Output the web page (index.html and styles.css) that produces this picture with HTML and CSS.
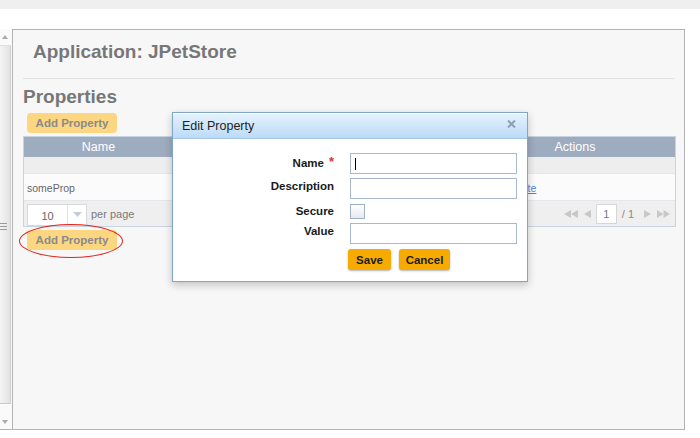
FILE: index.html
```html
<!DOCTYPE html>
<html>
<head>
<meta charset="utf-8">
<title>JPetStore Properties</title>
<link rel="stylesheet" href="styles.css">
</head>
<body>
<div class="topstrip"></div>
<div class="spacer"></div>
<div class="frame">
  <div class="sidebar">
    <div class="sb-up"><svg width="6" height="4" viewBox="0 0 6 4"><polygon points="0,4 3,0 6,4" fill="#aaa"/></svg></div>
    <div class="sb-thumb">
      <svg width="8" height="8" viewBox="0 0 8 8"><rect x="0" y="1" width="7" height="1" fill="#9a9a9a"/><rect x="0" y="4" width="7" height="1" fill="#9a9a9a"/><rect x="0" y="7" width="7" height="1" fill="#9a9a9a"/></svg>
    </div>
    <div class="sb-down"><svg width="6" height="4" viewBox="0 0 6 4"><polygon points="0,0 6,0 3,4" fill="#aaa"/></svg></div>
  </div>
  <div class="panel">
    <h1 class="app-title">Application: JPetStore</h1>
    <div class="sep"></div>
    <h2 class="section-title">Properties</h2>
    <button class="btn-add">Add Property</button>
    <div class="grid-table">
      <div class="thead">
        <div class="th">Name</div>
        <div class="th"></div>
        <div class="th">Actions</div>
      </div>
      <div class="filter-row"></div>
      <div class="data-row">
        <div class="td td-name">someProp</div>
        <div class="td"></div>
        <div class="td td-actions"><a class="link" href="#">Delete</a></div>
      </div>
      <div class="pager">
        <div class="pager-left">
          <div class="select">
            <span class="select-val">10</span>
            <span class="select-arrow"><svg width="9" height="5" viewBox="0 0 9 5"><polygon points="0,0 9,0 4.5,5" fill="#c3ccd8"/></svg></span>
          </div>
          <span class="per-page">per page</span>
        </div>
        <div class="pager-right">
          <svg class="pg-first" width="14" height="8" viewBox="0 0 14 8"><polygon points="7,0 0,4 7,8" fill="#c8c8c8"/><polygon points="14,0 7,4 14,8" fill="#c8c8c8"/></svg>
          <svg class="pg-prev" width="7" height="8" viewBox="0 0 7 8"><polygon points="7,0 0,4 7,8" fill="#c8c8c8"/></svg>
          <span class="pg-input">1</span>
          <span class="pg-total">/ 1</span>
          <svg class="pg-next" width="7" height="8" viewBox="0 0 7 8"><polygon points="0,0 7,4 0,8" fill="#c8c8c8"/></svg>
          <svg class="pg-last" width="13" height="8" viewBox="0 0 13 8"><polygon points="0,0 6.5,4 0,8" fill="#c8c8c8"/><polygon points="6.5,0 13,4 6.5,8" fill="#c8c8c8"/></svg>
        </div>
      </div>
    </div>
    <button class="btn-add btn-add-bottom">Add Property</button>
  </div>
</div>

<div class="highlight"></div>

<div class="dialog">
  <div class="dialog-title">
    <span>Edit Property</span>
    <svg class="dialog-close" width="9" height="8" viewBox="0 0 9 8"><path d="M1 0.5 L8 7.5 M8 0.5 L1 7.5" stroke="#8aa0b9" stroke-width="2"/></svg>
  </div>
  <div class="form">
    <label class="lbl lbl-req">Name<span class="req">*</span></label>
    <span class="field-focus"><input class="inp" type="text"></span>
    <label class="lbl">Description</label>
    <input class="inp" type="text">
    <label class="lbl">Secure</label>
    <span class="chk"></span>
    <label class="lbl">Value</label>
    <input class="inp" type="text">
    <span></span>
    <div class="actions">
      <button class="btn btn-save">Save</button>
      <button class="btn btn-cancel">Cancel</button>
    </div>
  </div>
</div>
</body>
</html>
```

FILE: styles.css
```css
* { box-sizing: border-box; }
html, body { margin: 0; padding: 0; }
body {
  width: 700px;
  height: 438px;
  overflow: hidden;
  background: #ffffff;
  font-family: "Liberation Sans", Arial, sans-serif;
  position: relative;
}
.topstrip { height: 9px; background: #efefef; }
.spacer { height: 20px; background: #ffffff; }

.frame {
  display: flex;
  width: 685px;
  height: 401px;
  border-bottom: 1px solid #b3b3b3;
}
.sidebar {
  width: 12px;
  display: flex;
  flex-direction: column;
  background: #fafafa;
}
.sb-up {
  height: 16px;
  display: flex;
  align-items: center;
  padding-left: 2px;
}
.sb-up svg, .sb-down svg { display: block; }
.sb-thumb {
  height: 359px;
  width: 11px;
  background: linear-gradient(to right, #f4f4f4, #e3e3e3);
  border-top: 1px solid #dedede;
  border-right: 1px solid #cfcfcf;
  border-bottom: 1px solid #c9c9c9;
  display: flex;
  align-items: center;
  padding-top: 2px;
}
.sb-thumb svg { display: block; }
.sb-down {
  flex: 1;
  display: flex;
  align-items: flex-end;
  padding: 0 0 5px 2px;
}

.panel {
  width: 673px;
  height: 400px;
  background: #f7f7f7;
  border: 1px solid #b3b3b3;
  border-bottom: none;
  padding: 0 8px 0 10px;
}
.app-title {
  margin: 10px 0 0 10px;
  font-size: 19px;
  line-height: 24px;
  font-weight: bold;
  color: #777777;
}
.sep {
  margin-top: 14px;
  border-top: 1px solid #e2e2e2;
  width: 651px;
}
.section-title {
  margin: 6px 0 0 0;
  font-size: 19px;
  line-height: 24px;
  font-weight: bold;
  color: #777777;
}
.btn-add {
  display: block;
  margin: 4px 0 0 4px;
  width: 90px;
  height: 20px;
  padding: 0;
  border: none;
  border-radius: 4px;
  background: #fcd681;
  color: #8a8a8a;
  font-family: "Liberation Sans", Arial, sans-serif;
  font-size: 11.5px;
  font-weight: bold;
}
.btn-add-bottom { margin-top: 3px; }

.grid-table {
  margin-top: 3px;
  width: 653px;
  border: 1px solid #c9d4e2;
}
.thead, .data-row {
  display: grid;
  grid-template-columns: 149px 302px 200px;
}
.thead {
  height: 20px;
  background: #9eacbf;
}
.th {
  color: #ffffff;
  font-size: 12.5px;
  line-height: 20px;
  text-align: center;
}
.filter-row {
  height: 17px;
  background: #eeeeee;
  border-bottom: 1px solid #e6e6e6;
}
.data-row {
  height: 26px;
  background: #fbfbfc;
}
.td {
  font-size: 10.5px;
  line-height: 24px;
  padding-top: 2px;
  color: #666666;
}
.td-name { padding-left: 3px; }
.td-actions { padding-left: 31px; }
.link { color: #4f88cf; text-decoration: underline; }

.pager {
  height: 26px;
  background: #efefef;
  border-top: 1px solid #e3e7ec;
  display: flex;
  align-items: center;
  justify-content: space-between;
  padding: 0 5px 0 3px;
}
.pager-left { display: flex; align-items: center; }
.select {
  display: flex;
  width: 60px;
  height: 22px;
  margin-top: 2px;
  background: #ffffff;
  border: 1px solid #d9d9d9;
}
.select-val {
  width: 39px;
  text-align: center;
  font-size: 11px;
  line-height: 22px;
  color: #666666;
}
.select-arrow {
  flex: 1;
  border-left: 1px solid #e1e1e1;
  display: flex;
  align-items: center;
  justify-content: center;
}
.select-arrow svg { display: block; }
.per-page {
  margin-left: 4px;
  font-size: 11px;
  color: #7a7a7a;
}
.pager-right { display: flex; align-items: center; }
.pager-right svg { display: block; }
.pg-prev { margin-left: 6px; }
.pg-input {
  margin-left: 5px;
  width: 21px;
  height: 20px;
  background: #ffffff;
  border: 1px solid #d6d6d6;
  text-align: center;
  font-size: 11px;
  line-height: 18px;
  color: #777777;
}
.pg-total {
  margin-left: 5px;
  font-size: 11px;
  color: #8a8a8a;
}
.pg-next { margin-left: 10px; }
.pg-last { margin-left: 6px; }

.highlight {
  position: absolute;
  left: 19px;
  top: 224px;
  width: 104px;
  height: 34px;
  border: 1px solid #e3261d;
  border-radius: 50%;
}

.dialog {
  position: absolute;
  left: 172px;
  top: 112px;
  width: 356px;
  height: 170px;
  background: #ffffff;
  border: 1px solid #7fa4ce;
  box-shadow: 0 3px 8px rgba(0, 0, 0, 0.22);
}
.dialog-title {
  height: 26px;
  display: flex;
  align-items: center;
  justify-content: space-between;
  padding: 1px 11px 0 9px;
  background: linear-gradient(to bottom, #e6f2fe, #bcdbf8);
  border-bottom: 1px solid #a6c6e8;
  box-shadow: inset 0 1px 0 #ffffff;
  font-size: 12.5px;
  color: #1e1e1e;
}
.dialog-close { display: block; margin-top: -4px; }
.form {
  display: grid;
  grid-template-columns: 161px 167px;
  grid-template-rows: 21px 21px 16px 21px 21px;
  column-gap: 16px;
  row-gap: 4px;
  padding-top: 14px;
}
.form .actions { margin-top: 1px; }
.lbl {
  text-align: right;
  font-size: 11.5px;
  line-height: 14px;
  font-weight: bold;
  color: #1a1a1a;
  padding-top: 1px;
}
.lbl-req { padding-top: 3px; padding-right: 0; }
.req {
  display: inline-block;
  vertical-align: top;
  margin-left: 5px;
  font-size: 13px;
  line-height: 1;
  color: #e03030;
  margin-top: -1px;
}
.inp {
  display: block;
  width: 167px;
  height: 21px;
  margin: 0;
  border: 1px solid #a8b9cf;
  background: #ffffff;
  outline: none;
}
.field-focus { position: relative; display: block; }
.field-focus::after {
  content: "";
  position: absolute;
  left: 5px;
  top: 5px;
  width: 1px;
  height: 12px;
  background: #000000;
}
.chk {
  display: block;
  width: 15px;
  height: 15px;
  margin-top: 1px;
  border: 1px solid #9fb1c7;
  background: linear-gradient(to bottom, #ffffff, #e4eaf2);
}
.actions {
  display: flex;
  gap: 8px;
  margin-left: -2px;
}
.btn {
  height: 21px;
  padding: 0;
  border: none;
  border-radius: 3px;
  background: #f7ab00;
  box-shadow: 0 1px 2px rgba(0, 0, 0, 0.3);
  color: #1c1c1c;
  font-family: "Liberation Sans", Arial, sans-serif;
  font-size: 11.5px;
  font-weight: bold;
  text-align: center;
}
.btn-save { width: 43px; }
.btn-cancel { width: 51px; }
```
